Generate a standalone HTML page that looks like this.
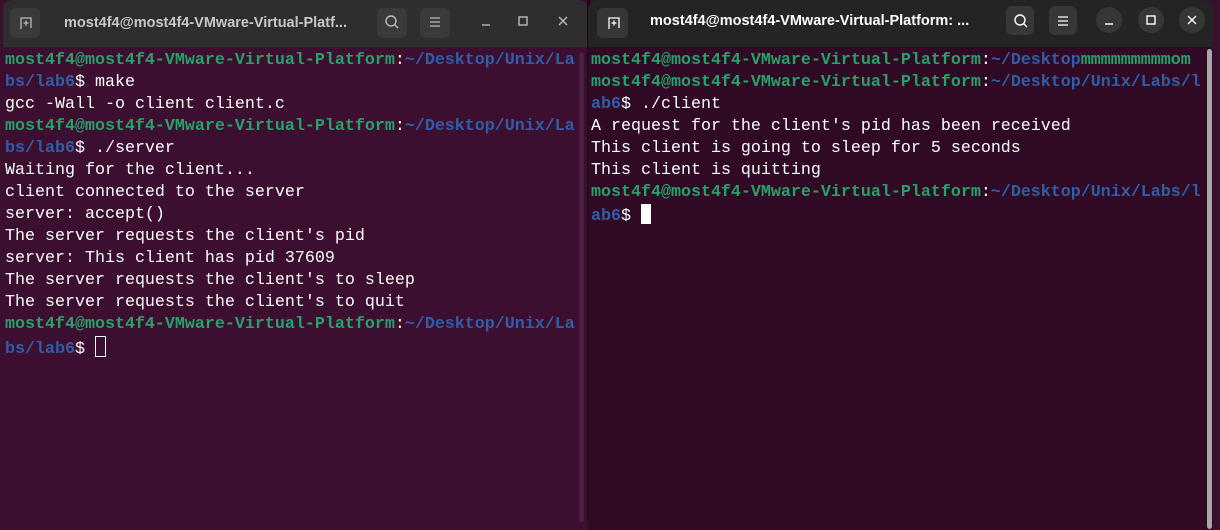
<!DOCTYPE html>
<html><head><meta charset="utf-8"><style>
body{margin:0;width:1220px;height:520px;background:#3b0f30;position:relative;overflow:hidden;font-family:"Liberation Sans",sans-serif}
.win{position:absolute;top:0;height:530px;border-radius:10px 10px 0 0;overflow:hidden}
.hd{height:47px;position:relative;color:#ddd;font-size:14.5px;font-weight:bold}
.term{position:absolute;top:47px;left:0;right:0;bottom:0;font-family:"Liberation Mono",monospace;font-size:16.67px;line-height:22px;color:#fff;white-space:pre;padding:3px 0 0 2px}
.g{color:#26a269;font-weight:bold}.b{color:#2f5ea8;font-weight:bold}
.btn{position:absolute;top:8px;width:30px;height:30px;border-radius:6px}
.circ{position:absolute;top:10px;width:26px;height:26px;border-radius:50%}
svg{position:absolute}
.cur{display:inline-block;width:9px;height:19px;vertical-align:-4px}
</style></head><body>
<div class="win" style="left:3px;width:585px;background:#3c0e30">
 <div class="hd" style="background:#2e2e2e">
  <div class="btn" style="left:7px;background:#3a3a3a"></div>
  <svg style="left:17px;top:17px" width="12" height="12" viewBox="0 0 12 12" fill="none" stroke="#bbb" stroke-width="1.3"><path d="M1 12V1h10v10"/><path d="M6 3.5v5M3.5 6h5"/></svg>
  <div style="position:absolute;left:61px;top:15px;color:#c8c8c8">most4f4@most4f4-VMware-Virtual-Platf...</div>
  <div class="btn" style="left:374px;background:#3a3a3a"></div>
  <svg style="left:381px;top:14px" width="16" height="16" viewBox="0 0 16 16" fill="none" stroke="#bbb" stroke-width="1.4"><circle cx="7" cy="7" r="5"/><path d="M10.5 10.5L14 14"/></svg>
  <div class="btn" style="left:417px;background:#3a3a3a"></div>
  <svg style="left:426px;top:16px" width="12" height="12" viewBox="0 0 12 12" stroke="#bbb" stroke-width="1.3"><path d="M1 2h10M1 6h10M1 10h10"/></svg>
  <svg style="top:16px;left:478px" width="10" height="10" viewBox="0 0 10 10" stroke="#bbb" stroke-width="1.4"><path d="M1 9h8"/></svg>
  <svg style="left:515px;top:16px" width="10" height="10" viewBox="0 0 10 10" fill="none" stroke="#bbb" stroke-width="1.4"><rect x="1" y="1" width="8" height="8"/></svg>
  <svg style="top:16px;left:555px" width="10" height="10" viewBox="0 0 10 10" stroke="#bbb" stroke-width="1.4"><path d="M1 1l8 8M9 1l-8 8"/></svg>
 </div>
 <div style="position:absolute;left:576px;top:52px;width:5px;height:470px;background:#4a2040;border-radius:3px"></div>
 <div class="term"><span class="g">most4f4@most4f4-VMware-Virtual-Platform</span>:<span class="b">~/Desktop/Unix/La
bs/lab6</span>$ make
gcc -Wall -o client client.c
<span class="g">most4f4@most4f4-VMware-Virtual-Platform</span>:<span class="b">~/Desktop/Unix/La
bs/lab6</span>$ ./server
Waiting for the client...
client connected to the server
server: accept()
The server requests the client's pid
server: This client has pid 37609
The server requests the client's to sleep
The server requests the client's to quit
<span class="g">most4f4@most4f4-VMware-Virtual-Platform</span>:<span class="b">~/Desktop/Unix/La
bs/lab6</span>$ <span class="cur" style="border:1px solid #fff"></span></div>
</div>
<div style="position:absolute;left:587px;top:0;width:3px;height:520px;background:#1a0614"></div>
<div class="win" style="left:588px;width:625px;background:#300a24">
 <div class="hd" style="background:#242424">
  <div class="btn" style="left:9px;width:31px;background:#373737"></div>
  <svg style="left:20px;top:17px" width="12" height="12" viewBox="0 0 12 12" fill="none" stroke="#fff" stroke-width="1.3"><path d="M1 12V1h10v10"/><path d="M6 3.5v5M3.5 6h5"/></svg>
  <div style="position:absolute;left:62px;top:13px;color:#fff">most4f4@most4f4-VMware-Virtual-Platform: ...</div>
  <div class="btn" style="left:418px;width:28px;top:6px;height:29px;background:#373737"></div>
  <svg style="left:425px;top:13px" width="16" height="16" viewBox="0 0 16 16" fill="none" stroke="#fff" stroke-width="1.4"><circle cx="7" cy="7" r="5"/><path d="M10.5 10.5L14 14"/></svg>
  <div class="btn" style="left:461px;width:28px;top:6px;height:29px;background:#373737"></div>
  <svg style="left:469px;top:15px" width="12" height="12" viewBox="0 0 12 12" stroke="#fff" stroke-width="1.3"><path d="M1 2h10M1 6h10M1 10h10"/></svg>
  <div class="circ" style="left:508px;top:7px;background:#373737"></div>
  <svg style="left:516px;top:15px" width="10" height="10" viewBox="0 0 10 10" stroke="#fff" stroke-width="1.4"><path d="M1 9h8"/></svg>
  <div class="circ" style="left:550px;top:7px;background:#373737"></div>
  <svg style="left:558px;top:15px" width="10" height="10" viewBox="0 0 10 10" fill="none" stroke="#fff" stroke-width="1.4"><rect x="1" y="1" width="8" height="8"/></svg>
  <div class="circ" style="left:591px;top:7px;background:#373737"></div>
  <svg style="left:599px;top:15px" width="10" height="10" viewBox="0 0 10 10" stroke="#fff" stroke-width="1.4"><path d="M1 1l8 8M9 1l-8 8"/></svg>
 </div>
 <div style="position:absolute;left:619px;top:49px;width:5px;height:480px;background:#a8a8a8;border-radius:3px"></div>
 <div class="term" style="padding-left:3px"><span class="g">most4f4@most4f4-VMware-Virtual-Platform</span>:<span class="b">~/Desktop</span><span class="g">mmmmmmmmmom</span>
<span class="g">most4f4@most4f4-VMware-Virtual-Platform</span>:<span class="b">~/Desktop/Unix/Labs/l
ab6</span>$ ./client
A request for the client's pid has been received
This client is going to sleep for 5 seconds
This client is quitting
<span class="g">most4f4@most4f4-VMware-Virtual-Platform</span>:<span class="b">~/Desktop/Unix/Labs/l
ab6</span>$ <span class="cur" style="background:#fff;width:10px;height:20px"></span></div>
</div>
</body></html>
